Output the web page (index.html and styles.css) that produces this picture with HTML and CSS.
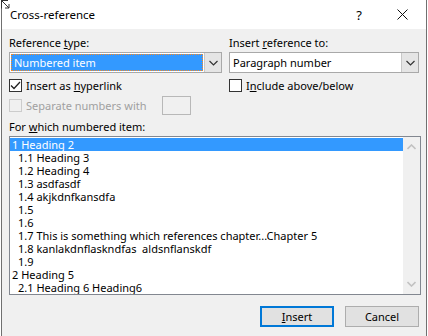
FILE: index.html
```html
<!DOCTYPE html>
<html lang="en">
<head>
    <meta charset="UTF-8">
    <title>Cross-reference</title>
    <link rel="stylesheet" href="styles.css">
</head>
<body>
    <div class="dialog">
        <svg class="corner" width="9" height="9" viewBox="0 0 9 9">
            <path d="M0.5 0 V8.5 M0 0.5 H7 M1 1 L8 8 M4 8 H8 V4" fill="none" stroke="#333" stroke-width="1"/>
        </svg>
        <div class="titlebar">
            <span class="title">Cross-reference</span>
            <div class="caption-btns">
                <span class="help">?</span>
                <svg class="close" width="11" height="11" viewBox="0 0 11 11">
                    <path d="M0.5 0.5 L10.5 10.5 M10.5 0.5 L0.5 10.5" stroke="#111" stroke-width="1"/>
                </svg>
            </div>
        </div>

        <div class="content">
            <div class="top-grid">
                <div class="col col-left">
                    <div class="label">Reference <u>t</u>ype:</div>
                    <div class="combo">
                        <span class="combo-text selected"><span class="focus">Numbered item</span></span>
                        <span class="combo-btn">
                            <svg width="9" height="6" viewBox="0 0 9 6"><path d="M0.5 1 L4.5 5 L8.5 1" fill="none" stroke="#333" stroke-width="1.2"/></svg>
                        </span>
                    </div>
                    <div class="check-row">
                        <span class="checkbox">
                            <svg width="11" height="11" viewBox="0 0 11 11"><path d="M1 5.5 L4 8.5 L10 2" fill="none" stroke="#222" stroke-width="1.3"/></svg>
                        </span>
                        <span>Insert as <u>h</u>yperlink</span>
                    </div>
                    <div class="check-row disabled">
                        <span class="checkbox"></span>
                        <span>Separate numbers with</span>
                        <span class="small-input"></span>
                    </div>
                </div>
                <div class="col col-right">
                    <div class="label">Insert <u>r</u>eference to:</div>
                    <div class="combo">
                        <span class="combo-text">Paragraph number</span>
                        <span class="combo-btn">
                            <svg width="9" height="6" viewBox="0 0 9 6"><path d="M0.5 1 L4.5 5 L8.5 1" fill="none" stroke="#333" stroke-width="1.2"/></svg>
                        </span>
                    </div>
                    <div class="check-row">
                        <span class="checkbox"></span>
                        <span>I<u>n</u>clude above/below</span>
                    </div>
                </div>
            </div>

            <div class="label list-label">For <u>w</u>hich numbered item:</div>
            <div class="listbox">
                <div class="items">
                    <div class="item selected">1 Heading 2</div>
                    <div class="item sub">1.1 Heading 3</div>
                    <div class="item sub">1.2 Heading 4</div>
                    <div class="item sub">1.3 asdfasdf</div>
                    <div class="item sub">1.4 akjkdnfkansdfa</div>
                    <div class="item sub">1.5</div>
                    <div class="item sub">1.6</div>
                    <div class="item sub">1.7 This is something which references chapter...Chapter 5</div>
                    <div class="item sub">1.8 kanlakdnflaskndfas&nbsp; aldsnflanskdf</div>
                    <div class="item sub">1.9</div>
                    <div class="item">2 Heading 5</div>
                    <div class="item sub">2.1 Heading 6 Heading6</div>
                </div>
                <div class="scrollbar">
                    <svg width="9" height="6" viewBox="0 0 9 6"><path d="M0.5 5 L4.5 1 L8.5 5" fill="none" stroke="#c2c2c2" stroke-width="1.6"/></svg>
                    <svg width="9" height="6" viewBox="0 0 9 6"><path d="M0.5 1 L4.5 5 L8.5 1" fill="none" stroke="#c2c2c2" stroke-width="1.6"/></svg>
                </div>
            </div>

            <div class="buttons">
                <button class="btn default"><u>I</u>nsert</button>
                <button class="btn">Cancel</button>
            </div>
        </div>
    </div>
</body>
</html>
```

FILE: styles.css
```css
body {
    margin: 0;
    width: 428px;
    height: 336px;
    overflow: hidden;
    background: #ffffff;
    font-family: "Noto Sans", "Open Sans", sans-serif;
    font-size: 11px;
    color: #000;
}
.dialog {
    position: relative;
    margin-left: 1px;
    width: 424px;
    height: 400px;
    border-left: 1px solid #707070;
    border-right: 1px solid #707070;
    background: #f0f0f0;
}
.corner {
    position: absolute; /* overlay glyph in the corner */
    top: 0;
    left: -1px;
}
.titlebar {
    height: 29px;
    background: #ffffff;
    display: flex;
    align-items: center;
    justify-content: space-between;
    padding-left: 8px;
}
.title {
    font-size: 11.5px;
}
.caption-btns {
    display: flex;
    align-items: center;
}
.help {
    width: 46px;
    margin-right: 15px;
    text-align: center;
    font-size: 13px;
}
.close {
    margin-right: 18px;
}
.content {
    padding: 7px 0 0 7px;
}
.top-grid {
    display: flex;
    gap: 7px;
}
.col {
    display: flex;
    flex-direction: column;
}
.col-left {
    width: 213px;
}
.col-right {
    width: 190px;
}
.label {
    line-height: 14px;
    height: 14px;
}
.combo {
    margin-top: 2px;
    height: 21px;
    box-sizing: border-box;
    border: 1px solid #a9a9a9;
    background: #fff;
    display: flex;
}
.combo-text {
    flex: 1;
    display: flex;
    align-items: center;
    padding-left: 3px;
}
.combo-text.selected {
    padding: 1px;
}
.focus {
    flex: 1;
    height: 100%;
    box-sizing: border-box;
    background: #3399ff;
    color: #fff;
    border: 1px dotted #ff8a1e;
    padding-left: 2px;
    line-height: 15px;
}
.combo-btn {
    width: 16px;
    background: #e5e5e5;
    border-left: 1px solid #c8c8c8;
    display: flex;
    align-items: center;
    justify-content: center;
}
.check-row {
    display: flex;
    align-items: center;
    margin-top: 6px;
    height: 13px;
    gap: 4px;
}
.checkbox {
    width: 13px;
    height: 13px;
    box-sizing: border-box;
    border: 1px solid #333;
    background: #fff;
    display: flex;
    align-items: center;
    justify-content: center;
}
.check-row.disabled {
    margin-top: 4px;
    height: 19px;
    color: #a0a0a0;
}
.disabled .checkbox {
    border-color: #cccccc;
    background: #f0f0f0;
}
.small-input {
    margin-left: 12px;
    width: 29px;
    height: 19px;
    box-sizing: border-box;
    border: 1px solid #b8b8b8;
    background: #f0f0f0;
}
.list-label {
    margin-top: 5px;
}
.listbox {
    margin-top: 2px;
    width: 412px;
    height: 159px;
    box-sizing: border-box;
    border: 1px solid #828790;
    background: #fff;
    display: flex;
}
.items {
    flex: 1;
    padding-top: 1px;
    overflow: hidden;
}
.item {
    height: 13px;
    line-height: 13px;
    padding-left: 2px;
    white-space: nowrap;
}
.item.sub {
    padding-left: 8px;
}
.item.selected {
    background: #3399ff;
    color: #fff;
}
.scrollbar {
    width: 17px;
    background: #f0f0f0;
    display: flex;
    flex-direction: column;
    justify-content: space-between;
    align-items: center;
    padding: 7px 0 7px;
}
.buttons {
    display: flex;
    justify-content: flex-end;
    gap: 11px;
    margin-top: 11px;
    width: 410px;
}
.btn {
    width: 74px;
    height: 21px;
    box-sizing: border-box;
    border: 1px solid #adadad;
    background: #e1e1e1;
    font-family: "Noto Sans", "Open Sans", sans-serif;
    font-size: 11px;
    color: #000;
    padding: 0;
}
.btn.default {
    border: 2px solid #0078d7;
}
```
